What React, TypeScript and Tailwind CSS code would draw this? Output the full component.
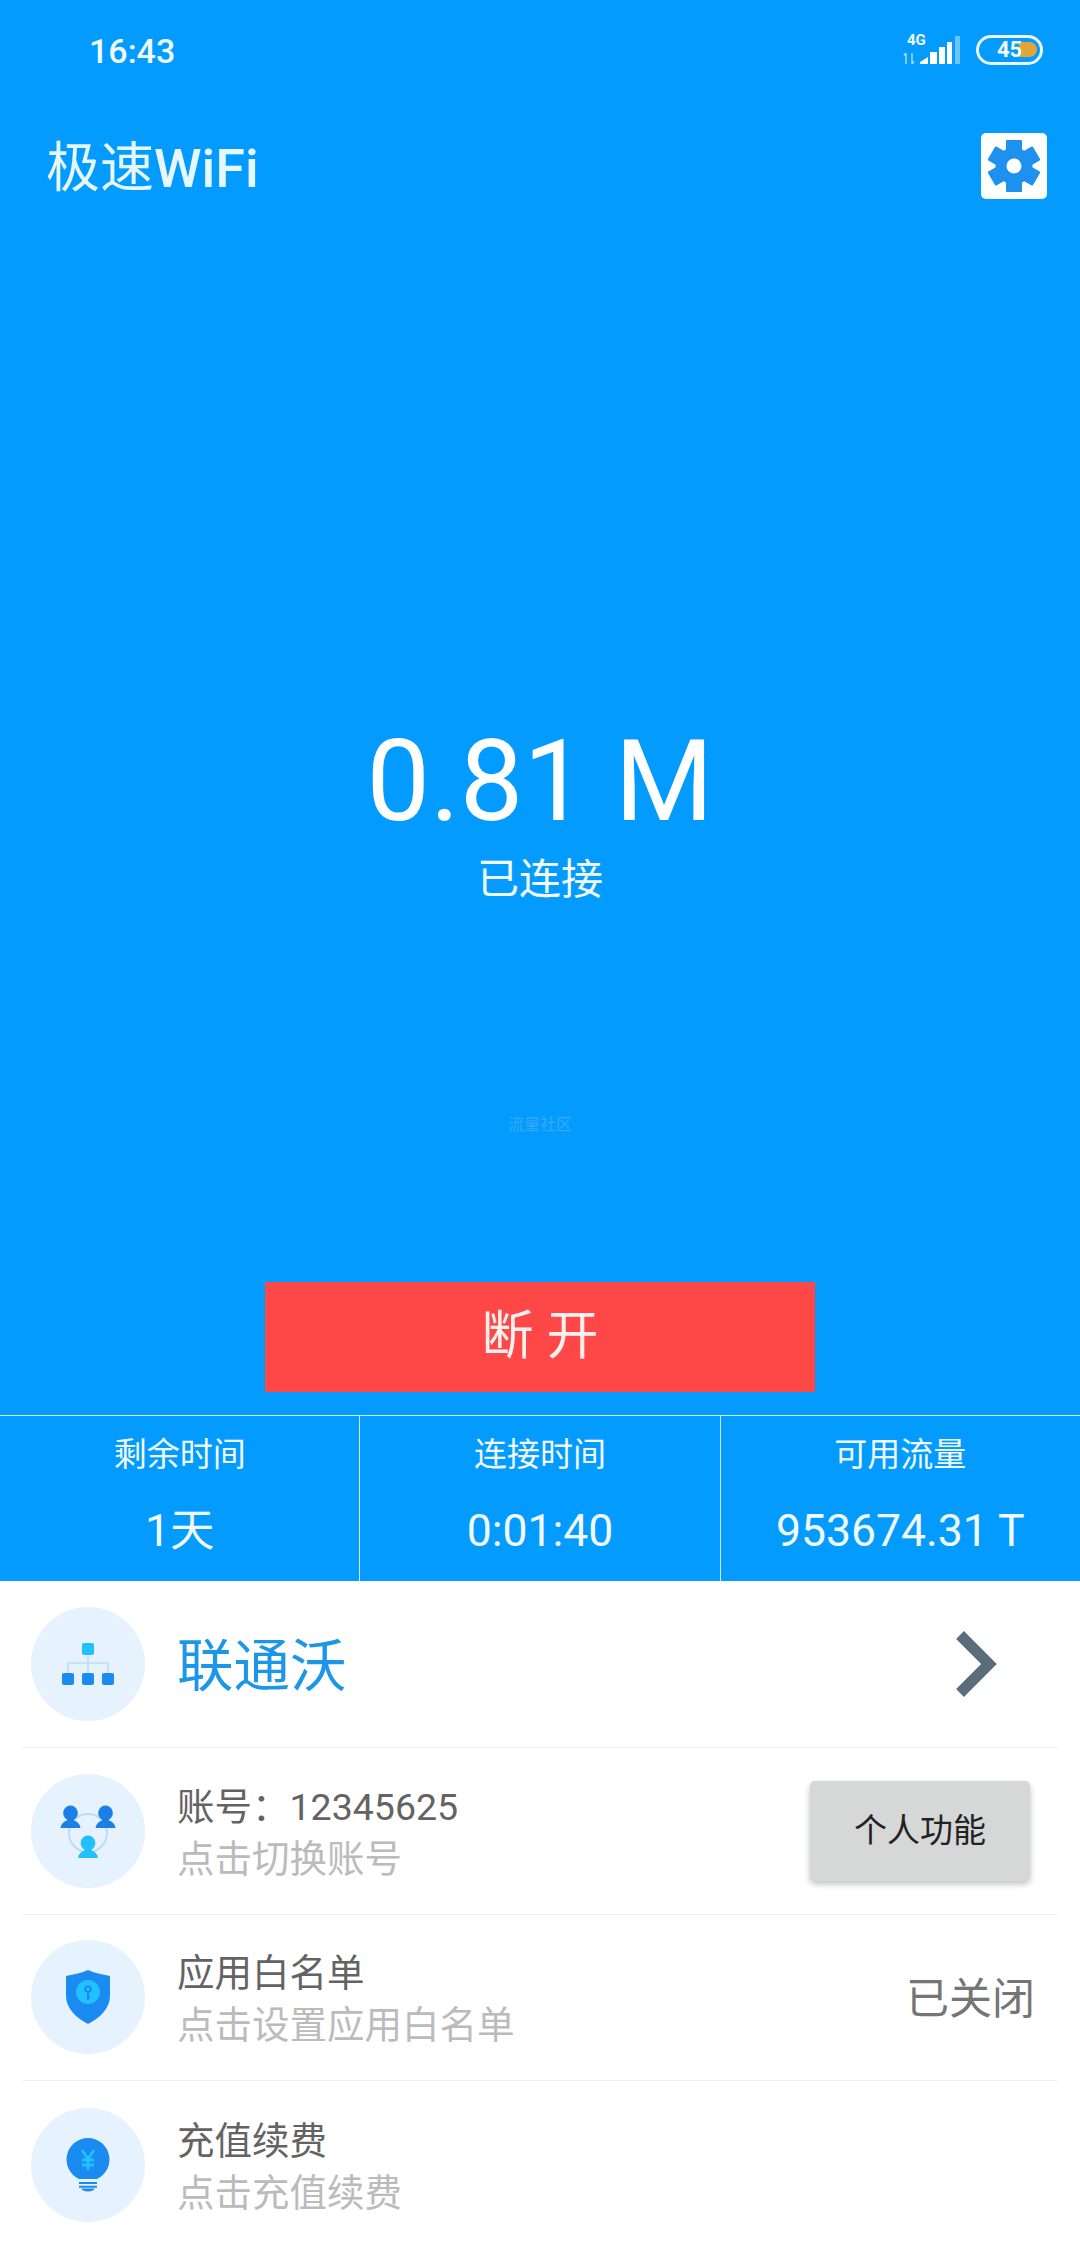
// App.tsx
const cjk = { fontFamily: 'Roboto, "Noto Sans CJK SC", sans-serif' };

function Circle({ children }: { children: React.ReactNode }) {
  return (
    <div className="ml-[9px] flex h-[114px] w-[114px] shrink-0 items-center justify-center rounded-full bg-[#e6f2fd]">
      {children}
    </div>
  );
}

function NetworkIcon() {
  return (
    <svg width="52" height="42" viewBox="0 0 52 42">
      <path d="M26 10V32M6 32V20H46V32" fill="none" stroke="#bcdcf5" strokeWidth="1.5" />
      <rect x="20" y="0" width="12" height="12" rx="2" fill="#22c0ff" />
      <rect x="0" y="30" width="12" height="12" rx="2" fill="#1a8bf0" />
      <rect x="20" y="30" width="12" height="12" rx="2" fill="#1a8bf0" />
      <rect x="40" y="30" width="12" height="12" rx="2" fill="#1a8bf0" />
    </svg>
  );
}

function Person({ x, y, color }: { x: number; y: number; color: string }) {
  return (
    <g fill={color}>
      <circle cx={x} cy={y} r="7.4" />
      <path d={`M${x - 3.5} ${y + 5}H${x + 3.5}V${y + 7.5}C${x + 7} ${y + 8.5} ${x + 9.5} ${y + 11} ${x + 10} ${y + 15}H${x - 10}C${x - 9.5} ${y + 11} ${x - 7} ${y + 8.5} ${x - 3.5} ${y + 7.5}Z`} />
    </g>
  );
}

function PeopleIcon() {
  return (
    <svg width="56" height="54" viewBox="0 0 56 54">
      <circle cx="28" cy="29" r="19" fill="none" stroke="#c2daef" strokeWidth="2" />
      <Person x={10.5} y={9} color="#1a80e8" />
      <Person x={45.5} y={9} color="#1a80e8" />
      <Person x={28} y={39} color="#22c0ff" />
    </svg>
  );
}

function ShieldIcon() {
  return (
    <svg width="44" height="54" viewBox="0 0 44 54">
      <path d="M22 0 C28 3 36 4 44 6 V26 C44 38 34 48 22 54 C10 48 0 38 0 26 V6 C8 4 16 3 22 0Z" fill="#1a8bf0" />
      <circle cx="22" cy="22" r="12" fill="#22c0ff" />
      <circle cx="22" cy="19" r="2.8" fill="none" stroke="#1a80e8" strokeWidth="1.6" />
      <path d="M22 22V30M22 27H24" stroke="#1a80e8" strokeWidth="1.6" fill="none" />
    </svg>
  );
}

function BulbIcon() {
  return (
    <svg width="44" height="54" viewBox="0 0 44 54">
      <path d="M22 0a21.500 21.500 0 0 1 9 41H13A21.500 21.500 0 0 1 22 0Z" fill="#1a8bf0" />
      <path d="M13 45H31M13 48.800H31" stroke="#1a8bf0" strokeWidth="2" />
      <path d="M15 50.500H29C27 54.500 17 54.500 15 50.500Z" fill="#1a8bf0" />
      <path d="M16 12L22 21L28 12M22 21V32M16 22H28M16 27H28" fill="none" stroke="#22c0ff" strokeWidth="2.800" />
    </svg>
  );
}

function GearIcon() {
  return (
    <svg width="54" height="54" viewBox="-27 -27 54 54" fill="#1e90f0">
      <circle r="18.500" />
      {[0, 60, 120, 180, 240, 300].map((deg) => (
        <rect key={deg} x="-8" y="-26" width="16" height="12" rx="1" transform={`rotate(${deg})`} />
      ))}
      <circle r="7.500" fill="#fff" />
    </svg>
  );
}

function StatusIcons() {
  return (
    <div className="mb-[3px] flex items-center gap-[16px]">
      <div className="relative h-[29px] w-[57px]">
        <span className="absolute left-[4px] top-[-3px] text-[15px] font-bold leading-[16px] text-[#f0faff]">4G</span>
        <svg className="absolute left-0 top-0" width="57" height="29" viewBox="0 0 57 29">
          <path d="M3 29V18M1 20.500L3 18M9 18V29M11 26.500L9 29" stroke="#a8dcff" strokeWidth="1.500" fill="none" />
          <path d="M17 29V27L25 22V29Z" fill="#fff" />
          <rect x="27" y="17" width="7" height="12" fill="#fff" />
          <rect x="36" y="12" width="6" height="17" fill="#fff" />
          <rect x="44" y="7" width="5" height="22" fill="#fff" />
          <rect x="52" y="1" width="5" height="28" fill="#6cc4ff" />
        </svg>
      </div>
      <div className="relative flex h-[30px] w-[67px] items-center rounded-full border-[3px] border-[#eaf7ff]">
        <div className="absolute right-[3px] h-[15px] w-[18px] rounded-r-full bg-[#e0a63a]" />
        <span className="relative ml-[18px] text-[22px] font-bold leading-none text-[#f4fbff]">45</span>
      </div>
    </div>
  );
}

function Stat({ label, value, border }: { label: string; value: string; border?: boolean }) {
  return (
    <div className={`flex flex-1 flex-col items-center pt-[20px] ${border ? 'border-r border-[#cfeaff]' : ''}`}>
      <div className="text-[33px] leading-[38px] text-[#f0faff]">{label}</div>
      <div className="mt-[32px] text-[44.500px] leading-[50px] text-[#f0faff]">{value}</div>
    </div>
  );
}

function Row({ icon, title, sub, right, last }: { icon: React.ReactNode; title: string; sub: string; right?: React.ReactNode; last?: boolean }) {
  return (
    <div className={`mx-[22px] flex h-[167px] items-center ${last ? '' : 'border-b border-[#eeeeee]'}`}>
      <Circle>{icon}</Circle>
      <div className="ml-[32px] flex-1 pt-[4px]">
        <div className="text-[37.500px] leading-[44px] text-[#636363]">{title}</div>
        <div className="mt-[8px] text-[37.500px] leading-[44px] text-[#bbbbbb]">{sub}</div>
      </div>
      {right}
    </div>
  );
}

export default function App() {
  return (
    <div className="flex h-[2248px] w-[1080px] flex-col overflow-hidden bg-white" style={cjk}>
      <div className="flex h-[1581px] flex-col bg-[#049bff] text-white">
        {/* status bar */}
        <div className="flex items-center justify-between pl-[89px] pr-[37px] pt-[29px]">
          <span className="text-[34px] font-medium leading-[44px] text-[#eefaff]">16:43</span>
          <StatusIcons />
        </div>

        {/* title */}
        <div className="mt-[60px] flex items-center justify-between pl-[46px] pr-[33px]">
          <span className="translate-y-[3px] text-[54px] leading-[66px] text-[#e6f7ff]">
            极速<span className="font-medium">WiFi</span>
          </span>
          <div className="flex h-[66px] w-[66px] items-center justify-center rounded-[5px] bg-white">
            <GearIcon />
          </div>
        </div>

        {/* speed */}
        <div className="mt-[518px] text-center text-[113px] leading-[130px] text-white">0.81 M</div>
        <div className="mt-[3px] text-center text-[42px] leading-[60px] text-[#f2fbff]">已连接</div>

        <div className="mt-[205px] text-center text-[16px] leading-[20px] text-[#35a9fb]">流量社区</div>

        {/* disconnect */}
        <button className="mx-auto mt-[147px] flex h-[110px] w-[550px] items-center justify-center bg-[#fe4848] text-[52px] text-[#fff0f0]">
          断 开
        </button>

        {/* stats */}
        <div className="mt-[23px] flex h-[166px] border-t border-[#cfeaff]">
          <Stat label="剩余时间" value="1天" border />
          <Stat label="连接时间" value="0:01:40" border />
          <Stat label="可用流量" value="953674.31 T" />
        </div>
      </div>

      {/* list */}
      <div className="mx-[22px] flex h-[167px] items-center border-b border-[#eeeeee]">
        <Circle><NetworkIcon /></Circle>
        <div className="ml-[32px] flex-1 pt-[6px] text-[56.500px] text-[#1c96e8]">联通沃</div>
        <svg className="mr-[60px]" width="42" height="66" viewBox="0 0 42 66">
          <path d="M4 4L33 33L4 62" fill="none" stroke="#5a6d7a" strokeWidth="11" />
        </svg>
      </div>
      <Row
        icon={<PeopleIcon />}
        title="账号：12345625"
        sub="点击切换账号"
        right={
          <button className="mr-[28px] h-[100px] w-[220px] rounded-[5px] bg-[#d6d7d7] text-[33px] text-[#222222] shadow-[0_3px_6px_rgba(0,0,0,0.25)]">
            个人功能
          </button>
        }
      />
      <Row
        icon={<ShieldIcon />}
        title="应用白名单"
        sub="点击设置应用白名单"
        right={<span className="mr-[23px] pt-[4px] text-[43px] text-[#757575]">已关闭</span>}
      />
      <Row icon={<BulbIcon />} title="充值续费" sub="点击充值续费" last />
    </div>
  );
}
